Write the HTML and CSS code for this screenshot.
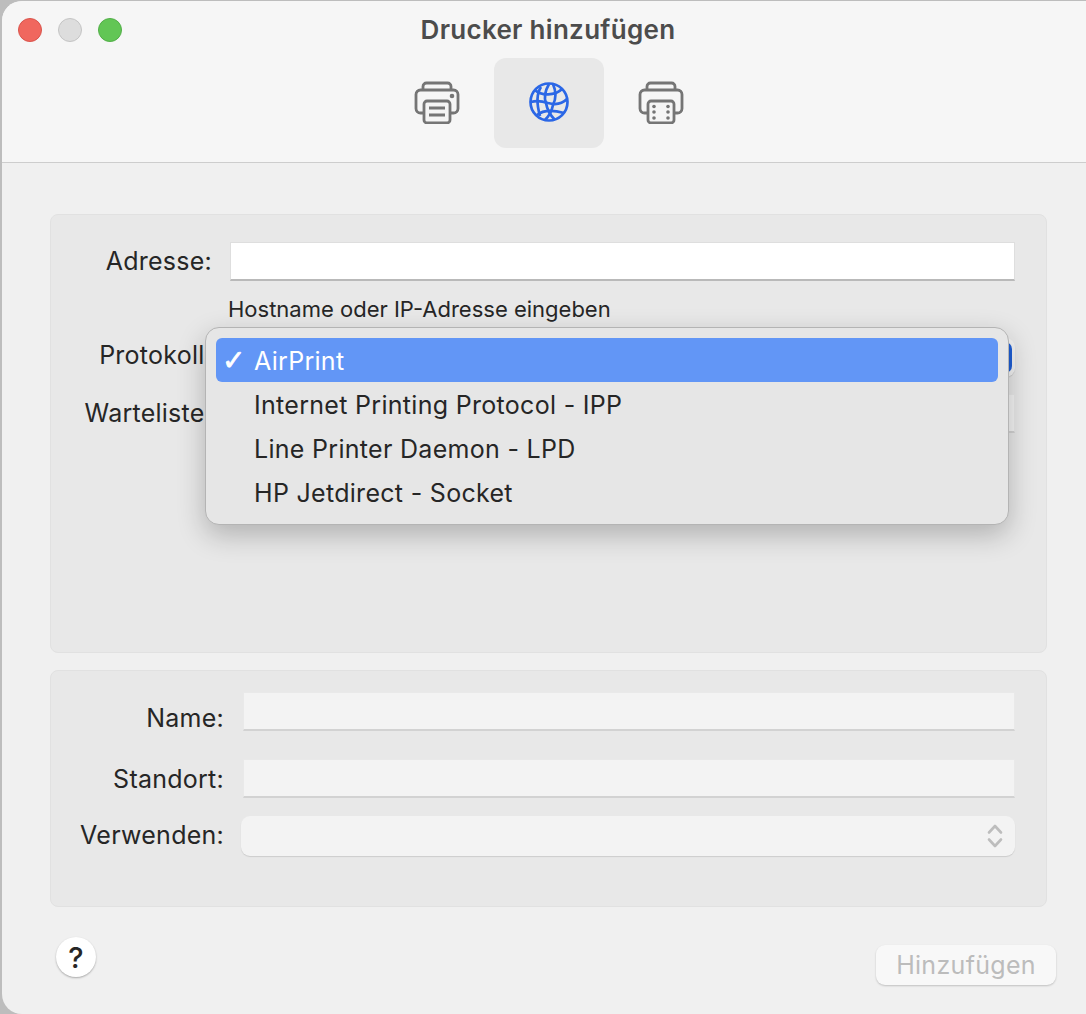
FILE: index.html
```html
<!DOCTYPE html>
<html lang="de">
<head>
<meta charset="utf-8">
<title>Drucker hinzufügen</title>
<link rel="stylesheet" href="styles.css">
</head>
<body>
<div class="window">
  <header class="toolbar">
    <div class="titlerow">
      <div class="lights">
        <span class="light red"></span>
        <span class="light grey"></span>
        <span class="light green"></span>
      </div>
      <h1 class="title">Drucker hinzufügen</h1>
    </div>
    <div class="tabs">
      <div class="tab">
        <svg class="tabicon" width="46" height="43" viewBox="0 0 46 43" fill="none" stroke="#757575" stroke-width="2.8">
          <path d="M9 9V5.5A3.5 3.5 0 0 1 12.500 2H33.500A3.500 3.500 0 0 1 37 5.500V9"/>
          <path d="M9 32H6.500A4.500 4.500 0 0 1 2 27.500V13.500A4.500 4.500 0 0 1 6.500 9H39.500A4.500 4.500 0 0 1 44 13.500V27.500A4.500 4.500 0 0 1 39.500 32H37"/>
          <rect x="10" y="20" width="26" height="22" rx="3" fill="#f5f5f5"/>
          <path d="M15 27H31M15 34H31"/>
          <circle cx="38" cy="15" r="2.300" fill="#757575" stroke="none"/>
        </svg>
      </div>
      <div class="tab selected">
        <svg class="globe" width="40" height="40" viewBox="0 0 40 40" fill="none" stroke="#2b67e6" stroke-width="2.700">
          <circle cx="20" cy="20" r="18.500"/>
          <path d="M12 5C8 11 7 20 11 34"/>
          <path d="M20 2C16 9 15 16 17 21C18 27 21 33 26 38"/>
          <path d="M24 2C27 9 27 17 24 23C23 28 21 33 16 38"/>
          <path d="M6 8C12 14 26 14 33 7"/>
          <path d="M2 20C8 18 13 19 19 21C26 23 32 23 38 17"/>
          <path d="M8 33C14 28 24 28 35 31"/>
        </svg>
      </div>
      <div class="tab">
        <svg class="tabicon" width="46" height="43" viewBox="0 0 46 43" fill="none" stroke="#757575" stroke-width="2.800">
          <path d="M9 9V5.500A3.500 3.500 0 0 1 12.500 2H33.500A3.500 3.500 0 0 1 37 5.500V9"/>
          <path d="M9 32H6.500A4.500 4.500 0 0 1 2 27.500V13.500A4.500 4.500 0 0 1 6.500 9H39.500A4.500 4.500 0 0 1 44 13.500V27.500A4.500 4.500 0 0 1 39.500 32H37"/>
          <rect x="10" y="20" width="26" height="22" rx="3" fill="#f5f5f5"/>
          <g fill="#757575" stroke="none">
            <circle cx="16" cy="25.500" r="1.800"/><circle cx="30" cy="25.500" r="1.800"/>
            <circle cx="16" cy="31" r="1.800"/><circle cx="30" cy="31" r="1.800"/>
            <circle cx="16" cy="37" r="1.800"/><circle cx="30" cy="37" r="1.800"/>
          </g>
        </svg>
      </div>
    </div>
  </header>

  <main class="content">
    <section class="panel panel-top">
      <div class="row row-address">
        <label class="label">Adresse:</label>
        <div class="field white"></div>
      </div>
      <p class="hint">Hostname oder IP-Adresse eingeben</p>
      <div class="row row-protocol">
        <label class="label">Protokoll:</label>
        <div class="select blue-select"><span class="stepper"></span></div>
      </div>
      <div class="row row-queue">
        <label class="label">Warteliste:</label>
        <div class="field dim"></div>
      </div>
      <ul class="menu">
        <li class="menuitem active"><span class="check">✓</span>AirPrint</li>
        <li class="menuitem">Internet Printing Protocol - IPP</li>
        <li class="menuitem">Line Printer Daemon - LPD</li>
        <li class="menuitem">HP Jetdirect - Socket</li>
      </ul>
    </section>

    <section class="panel panel-bottom">
      <div class="row row-name">
        <label class="label">Name:</label>
        <div class="field dim"></div>
      </div>
      <div class="row row-place">
        <label class="label">Standort:</label>
        <div class="field dim"></div>
      </div>
      <div class="row row-use">
        <label class="label">Verwenden:</label>
        <div class="select plain-select">
          <svg width="16" height="26" viewBox="0 0 16 26" fill="none" stroke="#bdbdbd" stroke-width="2.600" stroke-linecap="round" stroke-linejoin="round">
            <path d="M2 9.500L8 3L14 9.500"/>
            <path d="M2 16.500L8 23L14 16.500"/>
          </svg>
        </div>
      </div>
    </section>

    <footer class="footer">
      <button class="help">?</button>
      <button class="add">Hinzufügen</button>
    </footer>
  </main>
</div>
</body>
</html>
```

FILE: styles.css
```css
* { box-sizing: border-box; }
html, body { margin: 0; height: 100%; }
body {
  background: #bdbdbd;
  width: 1086px;
  height: 1014px;
  overflow: hidden;
  padding: 1px 0 0 2px;
  font-family: Inter, "Noto Sans", sans-serif;
  color: #262626;
}
.window {
  height: 1013px;
  background: #f0f0f0;
  border-radius: 20px 0 0 20px;
  overflow: hidden;
  display: flex;
  flex-direction: column;
}
.toolbar {
  height: 162px;
  background: #f6f6f6;
  border-bottom: 1px solid #cdcdcd;
  padding: 0 6px 0 16px;
  flex: none;
}
.titlerow {
  height: 57px;
  display: grid;
  grid-template-columns: 1fr auto 1fr;
  align-items: center;
}
.lights { display: flex; gap: 16px; margin-top: 1px; }
.light { width: 24px; height: 24px; border-radius: 50%; border: 1px solid; }
.red { background: #f0675e; border-color: #d9544c; }
.grey { background: #dddddd; border-color: #c4c4c4; }
.green { background: #62c655; border-color: #52ae48; }
.title {
  margin: -1px 2px 0 0;
  font-size: 26px;
  font-weight: 600;
  color: #4c4c4c;
  letter-spacing: .3px;
}
.tabs { display: flex; justify-content: center; gap: 2px; }
.tab {
  width: 110px;
  height: 90px;
  border-radius: 12px;
  display: flex;
  align-items: center;
  justify-content: center;
}
.tab.selected { background: #e8e8e8; }
.tabicon { margin-top: -1px; }
.globe { margin-top: -3px; }
.content {
  flex: 1;
  padding: 51px 39px 0 48px;
  display: flex;
  flex-direction: column;
}
.panel {
  position: relative;
  background: #e8e8e8;
  border: 1px solid #e1e1e1;
  border-radius: 8px;
}
.panel-top { height: 439px; padding-top: 27px; }
.panel-bottom { height: 237px; margin-top: 17px; padding-top: 21px; }
.row { display: grid; align-items: center; }
.panel-top .row { grid-template-columns: 161px 785px; column-gap: 18px; }
.panel-bottom .row { grid-template-columns: 173px 772px; column-gap: 19px; }
.label { font-size: 25px; letter-spacing: .25px; text-align: right; white-space: nowrap; line-height: 39px; }
.row-name .label { line-height: 25px; margin-top: 14px; }
.row-place .label { line-height: 37px; margin-top: 2px; }
.row-protocol .label { line-height: 35px; margin-bottom: 4px; }
.row-use .label { line-height: 38px; margin-bottom: 2px; }
.field { height: 39px; border: 1px solid #dedede; border-bottom: 2px solid #b9b9b9; }
.white { background: #fff; }
.dim { background: #f3f3f3; border-color: #e9e9e9; border-bottom-color: #d2d2d2; }
.hint {
  margin: 15px 0 15px 177px;
  font-size: 22px;
  line-height: 27px;
  color: #262626;
}
.row-queue { margin-top: 17px; }
.select {
  height: 39px;
  border-radius: 9px;
  background: #f3f3f3;
  box-shadow: 0 1px 1px rgba(0,0,0,.12);
  display: flex;
  align-items: center;
  justify-content: flex-end;
}
.stepper {
  width: 30px;
  height: 31px;
  margin-right: 3px;
  border-radius: 7px;
  background: #1f5fd6;
}
.row-place { margin-top: 28px; }
.row-use { margin-top: 18px; }
.plain-select { height: 40px; margin-left: -2px; padding-right: 12px; background: #f3f3f3; }
.menu {
  position: absolute;
  left: 154px;
  top: 112px;
  width: 804px;
  height: 198px;
  margin: 0;
  padding: 10px;
  list-style: none;
  background: #e6e6e6;
  border: 1px solid #b4b4b4;
  border-radius: 14px;
  box-shadow: 0 10px 28px rgba(0,0,0,.24);
}
.menuitem {
  height: 44px;
  padding-left: 38px;
  position: relative;
  font-size: 25px;
  letter-spacing: .3px;
  line-height: 46px;
  border-radius: 6px;
  color: #262626;
}
.menuitem.active { background: #6296f6; color: #fff; }
.check {
  position: absolute;
  left: 6px;
  top: 0;
  font-family: "DejaVu Sans", sans-serif;
  font-size: 28px;
  -webkit-text-stroke: .7px #fff;
}
.footer {
  display: flex;
  align-items: flex-start;
  justify-content: space-between;
  margin: 30px -9px 0 6px;
}
.help {
  width: 40px;
  height: 40px;
  padding: 0;
  border: none;
  border-radius: 50%;
  background: #fff;
  box-shadow: 0 1px 2px rgba(0,0,0,.3);
  font-family: Inter, sans-serif;
  font-size: 29px;
  font-weight: 500;
  color: #262626;
}
.add {
  width: 180px;
  height: 40px;
  margin-top: 8px;
  padding: 0;
  border: none;
  border-radius: 9px;
  background: #f8f8f8;
  box-shadow: 0 1px 2px rgba(0,0,0,.2);
  font-family: Inter, sans-serif;
  font-size: 25px;
  letter-spacing: .3px;
  color: #bcbcbc;
}
```
